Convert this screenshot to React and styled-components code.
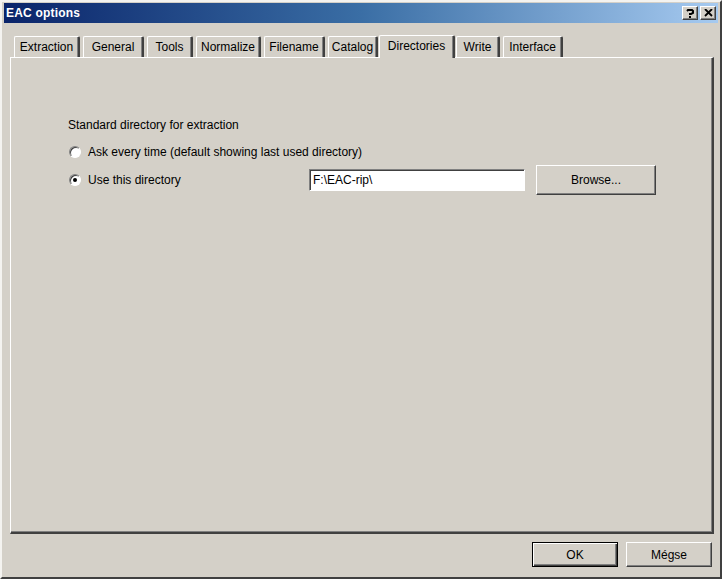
import React, { useState } from "react";
import styled, { createGlobalStyle } from "styled-components";

const GlobalStyle = createGlobalStyle`
    html, body {
        margin: 0;
        padding: 0;
        background: #d4d0c8;
    }
    body {
        font-family: "Liberation Sans", Arial, sans-serif;
        font-size: 12px;
        color: #000;
    }
`;

const tabs = [
    { label: "Extraction", width: 69 },
    { label: "General", width: 64 },
    { label: "Tools", width: 49 },
    { label: "Normalize", width: 68 },
    { label: "Filename", width: 64 },
    { label: "Catalog", width: 53 },
    { label: "Directories", width: 75 },
    { label: "Write", width: 47 },
    { label: "Interface", width: 63 },
];

const App = () => {
    const [active, setActive] = useState("Directories");
    const [mode, setMode] = useState("use");
    const [dir, setDir] = useState("F:\\EAC-rip\\");

    return (
        <>
            <GlobalStyle />
            <Window>
                <TitleBar>
                    <Title>EAC options</Title>
                    <TitleButtons>
                        <CaptionButton>
                            <svg width="8" height="9" viewBox="0 0 8 9">
                                <path
                                    d="M1 2 L2 1 L6 1 L7 2 L7 4 L5 5 L4 5 L4 6"
                                    fill="none"
                                    stroke="#000"
                                    strokeWidth="2"
                                />
                                <rect x="3" y="7" width="2" height="2" fill="#000" />
                            </svg>
                        </CaptionButton>
                        <CaptionButton>
                            <svg width="9" height="8" viewBox="0 0 9 8">
                                <path d="M1 0 L8 7 M8 0 L1 7" stroke="#000" strokeWidth="1.8" />
                            </svg>
                        </CaptionButton>
                    </TitleButtons>
                </TitleBar>
                <Body>
                    <TabStrip>
                        {tabs.map((t) => (
                            <Tab
                                key={t.label}
                                $width={t.width}
                                $active={active === t.label}
                                onClick={() => setActive(t.label)}
                            >
                                {t.label}
                            </Tab>
                        ))}
                    </TabStrip>
                    <Panel>
                        <GroupLabel>Standard directory for extraction</GroupLabel>
                        <OptionGrid>
                            <RadioRow onClick={() => setMode("ask")}>
                                <Radio $checked={mode === "ask"} />
                                Ask every time (default showing last used directory)
                            </RadioRow>
                            <span />
                            <span />
                            <RadioRow onClick={() => setMode("use")}>
                                <Radio $checked={mode === "use"} />
                                Use this directory
                            </RadioRow>
                            <PathInput value={dir} onChange={(e) => setDir(e.target.value)} />
                            <Button $width={120} $height={30}>Browse...</Button>
                        </OptionGrid>
                    </Panel>
                    <Footer>
                        <Button $width={86} $height={25} $default>OK</Button>
                        <Button $width={86} $height={25}>Mégse</Button>
                    </Footer>
                </Body>
            </Window>
        </>
    );
};

const Window = styled.div`
    width: 722px;
    height: 579px;
    box-sizing: border-box;
    background: #d4d0c8;
    border-style: solid;
    border-width: 2px;
    border-color: #f4f3f0 #404040 #404040 #f4f3f0;
    padding: 2px;
    display: flex;
    flex-direction: column;
`;

const TitleBar = styled.div`
    height: 20px;
    flex-shrink: 0;
    margin-top: -1px;
    background: linear-gradient(to right, #0a246a 0%, #3a6ea5 50%, #a6caf0 100%);
    display: flex;
    align-items: center;
    justify-content: space-between;
    padding: 0 2px 0 2px;
`;

const Title = styled.span`
    color: #fff;
    font-weight: bold;
    font-size: 12px;
    letter-spacing: 0.2px;
`;

const TitleButtons = styled.div`
    display: flex;
    gap: 2px;
`;

const CaptionButton = styled.div`
    width: 16px;
    height: 14px;
    box-sizing: border-box;
    background: #d4d0c8;
    border-style: solid;
    border-width: 1px;
    border-color: #fff #404040 #404040 #fff;
    box-shadow: inset -1px -1px 0 #808080;
    display: flex;
    align-items: center;
    justify-content: center;
`;

const Body = styled.div`
    flex: 1;
    display: flex;
    flex-direction: column;
    padding: 0 4px 0 6px;
`;

const TabStrip = styled.div`
    display: flex;
    align-items: flex-end;
    height: 23px;
    margin-top: 11px;
    padding-left: 4px;
`;

const Tab = styled.div`
    width: ${(p) => p.$width - 3 + (p.$active ? 4 : 0)}px;
    height: ${(p) => (p.$active ? 23 : 21)}px;
    margin: ${(p) => (p.$active ? "0 1px -1px -2px" : "0 3px 0 0")};
    box-sizing: border-box;
    background: #d4d0c8;
    border-style: solid;
    border-width: 1px 2px 0 1px;
    border-color: #fff #404040 #fff #fff;
    border-radius: 2px 2px 0 0;
    box-shadow: inset -1px 0 0 #808080;
    display: flex;
    align-items: center;
    justify-content: center;
    padding-bottom: ${(p) => (p.$active ? 3 : 0)}px;
    position: relative;
    z-index: ${(p) => (p.$active ? 2 : 1)};
    cursor: default;
    white-space: nowrap;
    font-size: 12px;
`;

const Panel = styled.div`
    height: 477px;
    box-sizing: border-box;
    border-style: solid;
    border-width: 1px 2px 2px 1px;
    border-color: #fff #404040 #404040 #fff;
    box-shadow: inset -1px -1px 0 #808080;
    padding: 59px 0 0 57px;
    position: relative;
    z-index: 1;
`;

const GroupLabel = styled.div`
    height: 16px;
    line-height: 16px;
`;

const OptionGrid = styled.div`
    display: grid;
    grid-template-columns: 229px 216px 120px;
    grid-template-rows: 26px 30px;
    column-gap: 11px;
    align-items: center;
    margin-top: 6px;
    margin-left: 1px;
`;

const RadioRow = styled.label`
    display: flex;
    align-items: center;
    gap: 7px;
    white-space: nowrap;
    cursor: default;
`;

const Radio = styled.span`
    width: 12px;
    height: 12px;
    box-sizing: border-box;
    border-radius: 50%;
    background: #fff;
    border-style: solid;
    border-width: 1px;
    border-color: #808080 #fff #fff #808080;
    box-shadow: inset 1px 1px 0 #404040;
    display: flex;
    align-items: center;
    justify-content: center;
    flex-shrink: 0;

    &::after {
        content: "";
        width: 4px;
        height: 4px;
        border-radius: 50%;
        background: #000;
        display: ${(p) => (p.$checked ? "block" : "none")};
    }
`;

const PathInput = styled.input`
    width: 216px;
    height: 22px;
    box-sizing: border-box;
    border-style: solid;
    border-width: 1px;
    border-color: #808080 #fff #fff #808080;
    box-shadow: inset 1px 1px 0 #404040;
    background: #fff;
    font-family: "Liberation Sans", Arial, sans-serif;
    font-size: 12px;
    padding: 0 3px;
    outline: none;
`;

const Button = styled.button`
    width: ${(p) => p.$width}px;
    height: ${(p) => p.$height}px;
    box-sizing: border-box;
    background: #d4d0c8;
    font-family: "Liberation Sans", Arial, sans-serif;
    font-size: 12px;
    color: #000;
    border-style: solid;
    border-width: 1px;
    border-color: ${(p) => (p.$default ? "#000" : "#fff #404040 #404040 #fff")};
    box-shadow: ${(p) =>
        p.$default
            ? "inset 1px 1px 0 #fff, inset -1px -1px 0 #404040, inset -2px -2px 0 #808080"
            : "inset -1px -1px 0 #808080"};
    padding: 0;
`;

const Footer = styled.div`
    display: flex;
    justify-content: flex-end;
    gap: 8px;
    padding: 8px 2px 0 0;
`;

export default App;
